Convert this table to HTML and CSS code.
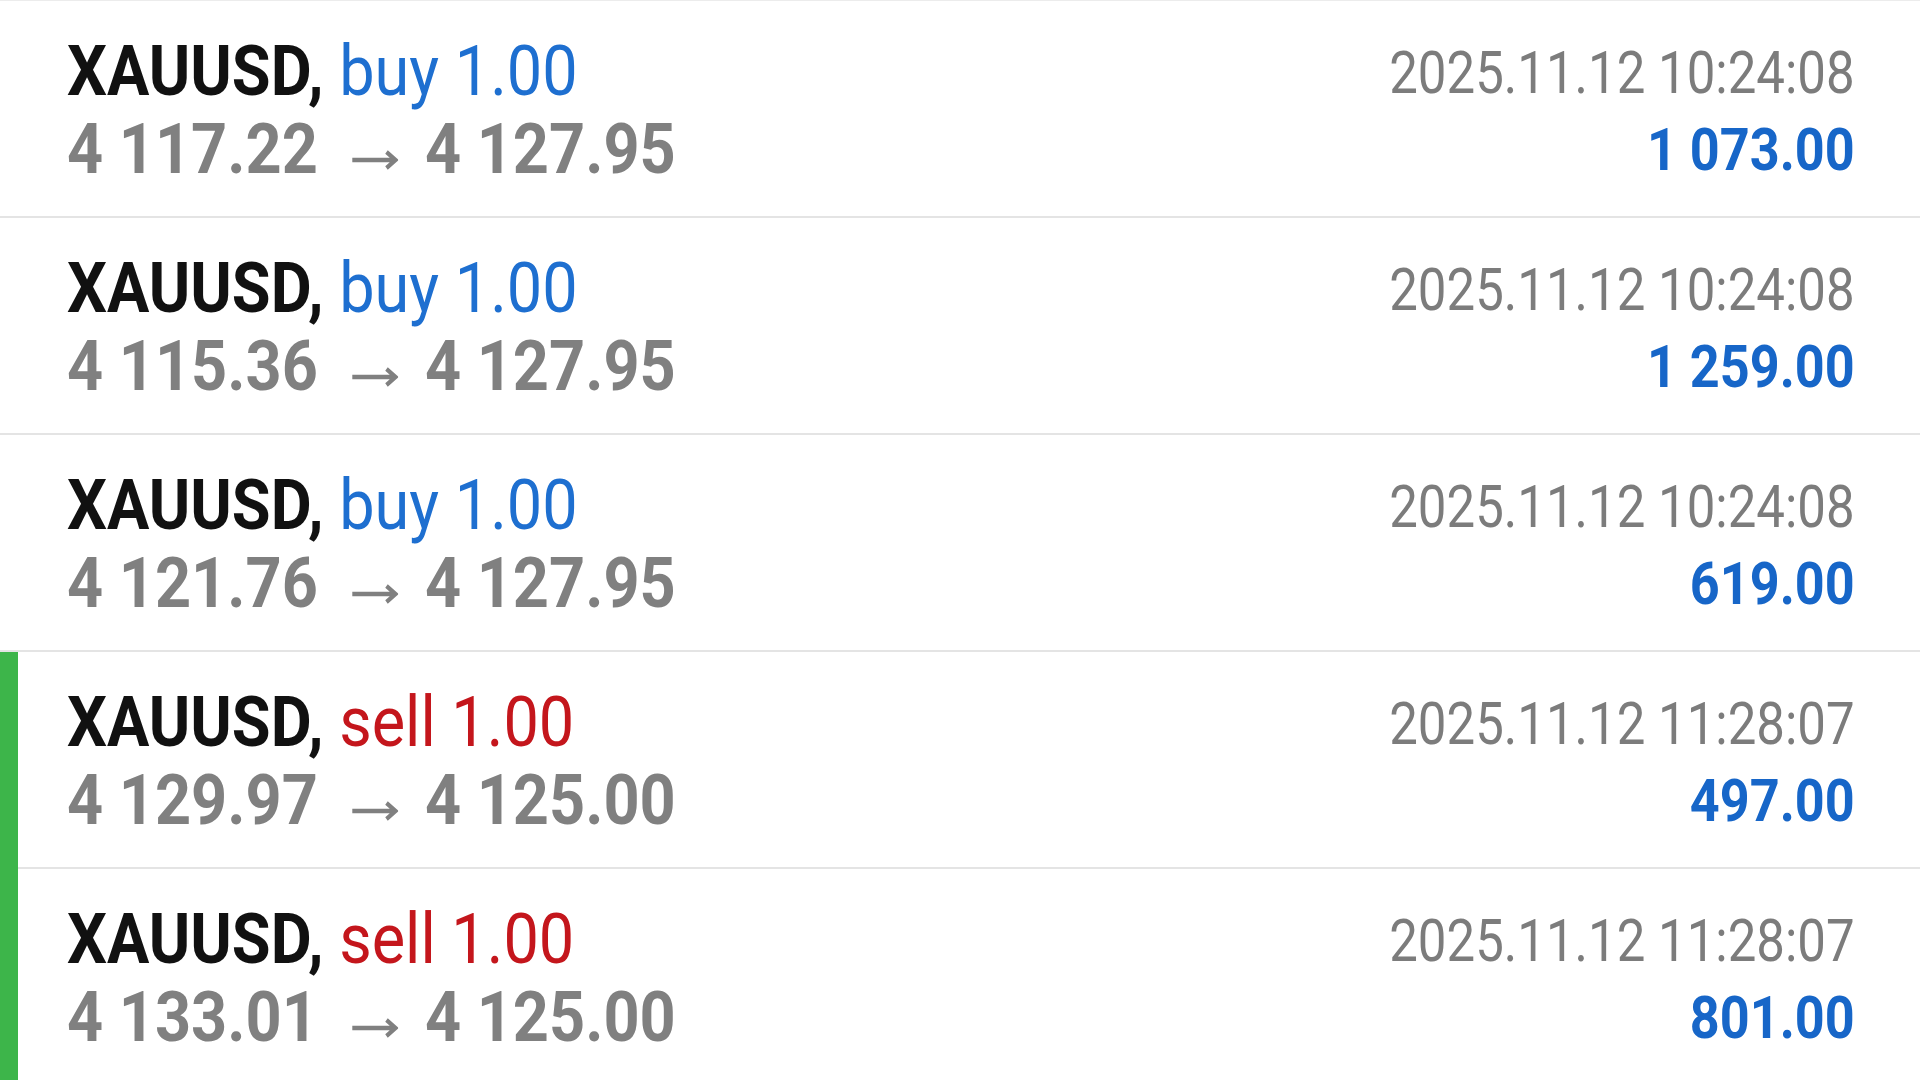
FILE: index.html
```html
<!DOCTYPE html>
<html lang="en">
<head>
  <meta charset="UTF-8" />
  <meta name="viewport" content="width=device-width, initial-scale=1.0" />
  <title>History</title>
  <link rel="stylesheet" href="styles.css">
</head>
<body>
  <ul class="deals">
    <li class="deal">
      <div class="info">
        <div class="title"><span class="symbol">XAUUSD,</span> <span class="buy">buy 1.00</span></div>
        <div class="prices">4 117.22<svg class="arrow" viewBox="0 0 53 22"><path d="M2 11H50M40 3l10 8-10 8"/></svg>4 127.95</div>
      </div>
      <div class="result">
        <div class="date">2025.11.12 10:24:08</div>
        <div class="profit">1 073.00</div>
      </div>
    </li>
    <li class="deal">
      <div class="info">
        <div class="title"><span class="symbol">XAUUSD,</span> <span class="buy">buy 1.00</span></div>
        <div class="prices">4 115.36<svg class="arrow" viewBox="0 0 53 22"><path d="M2 11H50M40 3l10 8-10 8"/></svg>4 127.95</div>
      </div>
      <div class="result">
        <div class="date">2025.11.12 10:24:08</div>
        <div class="profit">1 259.00</div>
      </div>
    </li>
    <li class="deal">
      <div class="info">
        <div class="title"><span class="symbol">XAUUSD,</span> <span class="buy">buy 1.00</span></div>
        <div class="prices">4 121.76<svg class="arrow" viewBox="0 0 53 22"><path d="M2 11H50M40 3l10 8-10 8"/></svg>4 127.95</div>
      </div>
      <div class="result">
        <div class="date">2025.11.12 10:24:08</div>
        <div class="profit">619.00</div>
      </div>
    </li>
    <li class="group">
      <ul class="deals">
        <li class="deal">
          <div class="info">
            <div class="title"><span class="symbol">XAUUSD,</span> <span class="sell">sell 1.00</span></div>
            <div class="prices">4 129.97<svg class="arrow" viewBox="0 0 53 22"><path d="M2 11H50M40 3l10 8-10 8"/></svg>4 125.00</div>
          </div>
          <div class="result">
            <div class="date">2025.11.12 11:28:07</div>
            <div class="profit">497.00</div>
          </div>
        </li>
        <li class="deal">
          <div class="info">
            <div class="title"><span class="symbol">XAUUSD,</span> <span class="sell">sell 1.00</span></div>
            <div class="prices">4 133.01<svg class="arrow" viewBox="0 0 53 22"><path d="M2 11H50M40 3l10 8-10 8"/></svg>4 125.00</div>
          </div>
          <div class="result">
            <div class="date">2025.11.12 11:28:07</div>
            <div class="profit">801.00</div>
          </div>
        </li>
      </ul>
    </li>
  </ul>
</body>
</html>
```

FILE: styles.css
```css
body {
  margin: 0;
  background: #fff;
  font-family: Roboto, "Noto Sans", sans-serif;
  height: 1080px;
  overflow: hidden;
}
.deals {
  list-style: none;
  margin: 0;
  padding: 0;
}
body > .deals {
  border-top: 1px solid #ececec;
}
.deal {
  display: flex;
  justify-content: space-between;
  padding: 31px 65px 0 67px;
  box-sizing: border-box;
  height: 217px;
  border-bottom: 2px solid #e4e4e4;
}
.group {
  border-left: 18px solid #3db54a;
}
.group .deal {
  padding-left: 49px;
}
.info {
  transform: scaleX(0.9);
  transform-origin: left center;
  font-size: 70px;
  line-height: 78px;
  white-space: nowrap;
}
.symbol {
  font-weight: bold;
  color: #111;
}
.buy {
  color: #1e6fd0;
}
.sell {
  color: #c4161c;
}
.prices {
  font-weight: bold;
  color: #808080;
}
.arrow {
  width: 53px;
  height: 22px;
  margin: 0 30px 0 36px;
  vertical-align: 2px;
  fill: none;
  stroke: #808080;
  stroke-width: 4.5;
}
.result {
  text-align: right;
  line-height: 77px;
  white-space: nowrap;
  padding-top: 2px;
}
.date {
  font-size: 60px;
  color: #7c7c7c;
  transform: scaleX(0.85);
  transform-origin: right center;
}
.profit {
  font-size: 60px;
  font-weight: bold;
  color: #1766c8;
  transform: scaleX(0.87);
  transform-origin: right center;
}
```
